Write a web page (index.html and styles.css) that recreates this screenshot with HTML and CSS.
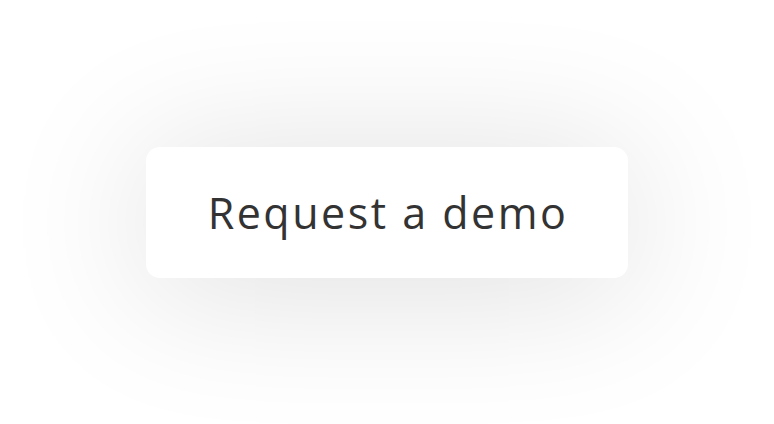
FILE: index.html
```html
<!DOCTYPE html>
<html>
<head>
<meta charset="utf-8">
<link rel="stylesheet" href="styles.css">
</head>
<body>
<div class="stage">
  <button class="cta">Request a demo</button>
</div>
</body>
</html>
```

FILE: styles.css
```css
html, body {
  margin: 0;
  padding: 0;
  background: #ffffff;
}
.stage {
  width: 774px;
  height: 424px;
  display: flex;
  align-items: center;
  justify-content: center;
}
.cta {
  width: 482px;
  height: 131px;
  border: none;
  border-radius: 14px;
  background: #ffffff;
  box-shadow: 0 10px 150px rgba(0, 0, 0, 0.14);
  font-family: "Open Sans", "Liberation Sans", sans-serif;
  font-size: 43px;
  font-weight: 400;
  letter-spacing: 2.5px;
  color: #333333;
  padding: 0 0 0 2px;
  cursor: pointer;
}
```
